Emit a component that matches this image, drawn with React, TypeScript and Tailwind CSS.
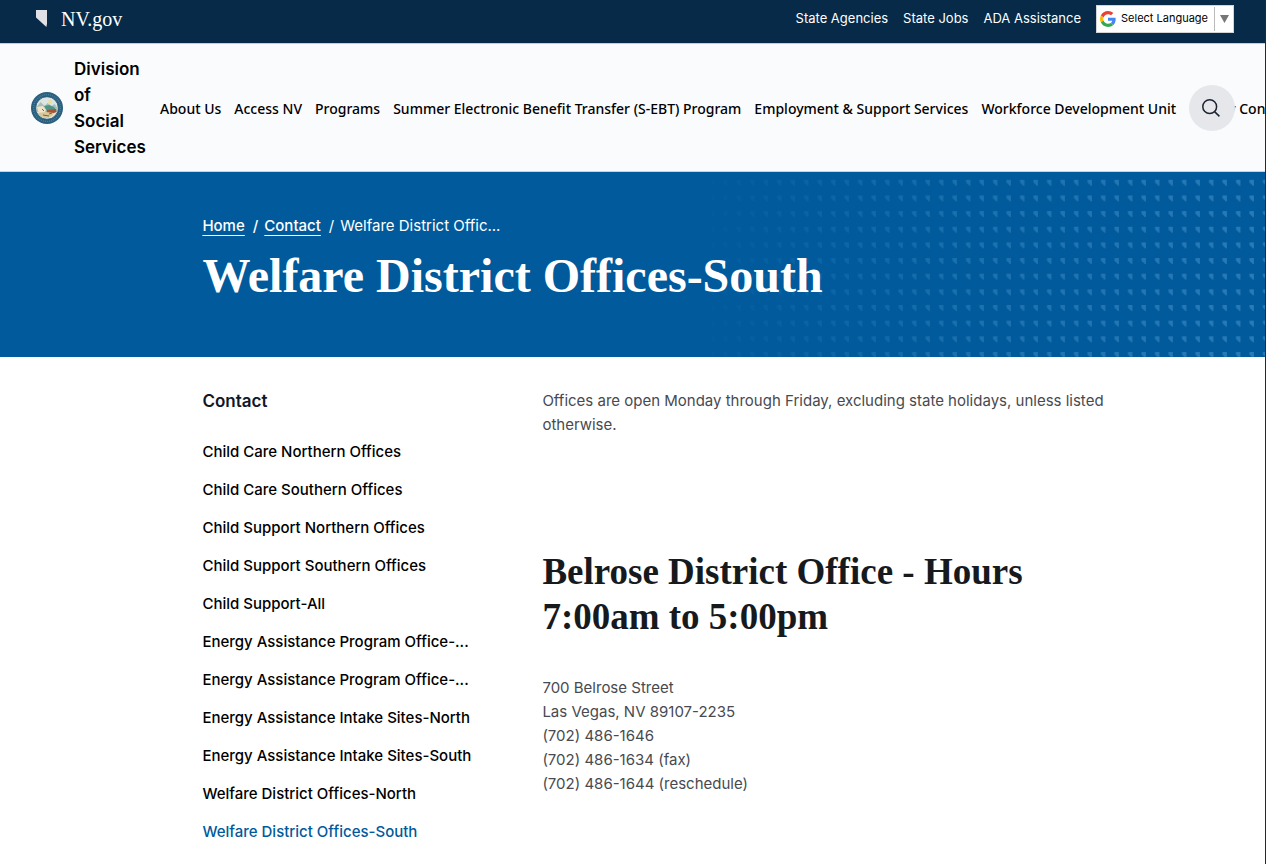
const utilityLinks = ["State Agencies", "State Jobs", "ADA Assistance"];

const navItems = [
  "About Us",
  "Access NV",
  "Programs",
  "Summer Electronic Benefit Transfer (S-EBT) Program",
  "Employment & Support Services",
  "Workforce Development Unit",
  "Energy Con",
];

const sideItems = [
  "Child Care Northern Offices",
  "Child Care Southern Offices",
  "Child Support Northern Offices",
  "Child Support Southern Offices",
  "Child Support-All",
  "Energy Assistance Program Office-...",
  "Energy Assistance Program Office-...",
  "Energy Assistance Intake Sites-North",
  "Energy Assistance Intake Sites-South",
  "Welfare District Offices-North",
  "Welfare District Offices-South",
];

const addressLines = [
  "700 Belrose Street",
  "Las Vegas, NV 89107-2235",
  "(702) 486-1646",
  "(702) 486-1634 (fax)",
  "(702) 486-1644 (reschedule)",
];

export default function App() {
  return (
    <div className="min-h-screen overflow-hidden border-r border-[#26282c] bg-white font-['Inter',sans-serif] text-black">
      <TopBar />
      <SiteHeader />
      <Hero />

      <div className="flex pt-8 pr-[10%] pl-[16%]">
        {/* Section menu */}
        <nav aria-label="Contact" className="w-[340px] shrink-0">
          <h2 className="text-[17px] leading-6 font-semibold text-[#0f172a]">Contact</h2>
          <ul className="pt-5">
            {sideItems.map((item, i) => (
              <li key={i} className="text-[15px] leading-[38px] font-medium whitespace-nowrap">
                <a
                  href="#"
                  className={i === sideItems.length - 1 ? "text-[#005a9c]" : "text-black"}
                >
                  {item}
                </a>
              </li>
            ))}
          </ul>
        </nav>

        <main className="min-w-0 flex-1 text-[15px] leading-6 text-[#474a50]">
          <p>
            Offices are open Monday through Friday, excluding state holidays, unless listed
            otherwise.
          </p>
          <h2 className="mt-28 font-['Liberation_Serif',serif] text-[37px] leading-[45px] font-bold text-[#171a1d]">
            Belrose District Office - Hours 7:00am to 5:00pm
          </h2>
          <address className="mt-[37px] not-italic">
            {addressLines.map((line) => (
              <div key={line}>{line}</div>
            ))}
          </address>
        </main>
      </div>
    </div>
  );
}

function TopBar() {
  return (
    <div className="flex h-11 items-center justify-between border-b border-[#c9ccd1] bg-[#062a48] pr-[31px] pb-1.5 pl-9 text-white">
      <a href="#" className="flex items-center gap-3.5">
        <svg width="11" height="17" viewBox="0 0 11 17" aria-hidden="true">
          <path d="M0 0h11v13.5l-.6 3.5L0 7.5z" fill="#dfe1e6" />
        </svg>
        <span className="font-['Liberation_Serif',serif] text-[20px] leading-6">NV.gov</span>
      </a>
      <div className="flex items-center gap-[15px] text-[13px]">
        {utilityLinks.map((link) => (
          <a key={link} href="#">
            {link}
          </a>
        ))}
        <LanguageSelect />
      </div>
    </div>
  );
}

function LanguageSelect() {
  return (
    <div className="flex h-7 w-[138px] items-center border border-[#d5d5d5] bg-white pl-[3px] text-black">
      <svg width="16" height="16" viewBox="0 0 48 48" className="shrink-0" aria-hidden="true">
        <path
          fill="#EA4335"
          d="M24 9.5c3.54 0 6.71 1.22 9.21 3.6l6.85-6.85C35.9 2.38 30.47 0 24 0 14.62 0 6.51 5.38 2.56 13.22l7.98 6.19C12.43 13.72 17.74 9.5 24 9.5z"
        />
        <path
          fill="#4285F4"
          d="M46.98 24.55c0-1.57-.15-3.09-.38-4.55H24v9.02h12.94c-.58 2.96-2.26 5.48-4.78 7.18l7.73 6c4.51-4.18 7.09-10.36 7.09-17.65z"
        />
        <path
          fill="#FBBC05"
          d="M10.53 28.59c-.48-1.45-.76-2.99-.76-4.59s.27-3.14.76-4.59l-7.98-6.19C.92 16.46 0 20.12 0 24c0 3.88.92 7.54 2.56 10.78l7.97-6.19z"
        />
        <path
          fill="#34A853"
          d="M24 48c6.48 0 11.93-2.13 15.89-5.81l-7.73-6c-2.15 1.45-4.92 2.3-8.16 2.3-6.26 0-11.57-4.22-13.47-9.91l-7.98 6.19C6.51 42.62 14.62 48 24 48z"
        />
      </svg>
      <select
        aria-label="Select Language"
        className="h-full min-w-0 flex-1 appearance-none pl-[5px] text-[11px]"
      >
        <option>Select Language</option>
      </select>
      <span className="h-6 w-px shrink-0 bg-[#bbbbbb]" />
      <svg width="18" height="8" viewBox="0 0 18 8" className="shrink-0" aria-hidden="true">
        <path d="M5 0h9L9.5 8z" fill="#767676" />
      </svg>
    </div>
  );
}

function SiteHeader() {
  return (
    <header className="relative flex items-center overflow-hidden border-b border-[#c9d3dd] bg-[#fafbfd] pt-3 pb-[11px] pl-[31px]">
      <StateSeal />
      <a
        href="#"
        className="ml-[11px] w-[86px] shrink-0 pr-5 text-[17px] leading-[26px] font-semibold"
      >
        Division of Social Services
      </a>
      <nav
        aria-label="Main"
        className="flex gap-[13px] pt-0.5 font-['Noto_Sans',sans-serif] text-sm font-medium whitespace-nowrap"
      >
        {navItems.map((item) => (
          <a key={item} href="#">
            {item}
          </a>
        ))}
      </nav>
      <button
        type="button"
        aria-label="Search"
        className="absolute top-1/2 right-[30px] flex size-[46px] -translate-y-1/2 items-center justify-center rounded-full bg-[#e5e7eb] pr-[3px] text-[#1b2430]"
      >
        <svg width="18" height="18" viewBox="0 0 18 18" fill="none" stroke="currentColor" strokeWidth="1.5">
          <circle cx="7.7" cy="7.7" r="6.9" />
          <path d="M12.6 12.6l4.8 4.8" />
        </svg>
      </button>
    </header>
  );
}

function StateSeal() {
  return (
    <svg width="32" height="32" viewBox="0 0 32 32" className="shrink-0" aria-hidden="true">
      <circle cx="16" cy="16" r="16" fill="#2b5f7e" />
      <circle cx="16" cy="16" r="13.4" fill="none" stroke="#4d86a3" strokeWidth="1.4" strokeDasharray=".8 1.2" />
      <circle cx="16" cy="16" r="11.3" fill="#dbe6e4" stroke="#1d4c6b" strokeWidth=".8" />
      <path d="M5.6 15l4-5 4 4 3-3 4 3 3-2 2.8 4v4H5.6z" fill="#a9bdb9" />
      <circle cx="19" cy="10" r="2" fill="#f1dc9a" />
      <path d="M13 14l5-1 5 2 2 3-9 1z" fill="#4f9585" />
      <path d="M6 15l6-1 3 4-3 5-4-1z" fill="#f0e3c8" />
      <path d="M16 18l9-1 .5 3-5 2-5-1z" fill="#a65336" />
      <path d="M7 21l8-1 8 1c-2 4-5 5-8 5s-6-1-8-5z" fill="#d9c797" />
      <path d="M11 17l2 2M18 22l3-1M12 23l6 1" stroke="#7b6143" strokeWidth="1" />
    </svg>
  );
}

function Hero() {
  return (
    <section className="relative h-[185px] bg-[#005a9c] pt-10 pl-[16%] text-white">
      <HeroPattern />
      <nav aria-label="Breadcrumb" className="relative text-[15px] leading-7">
        <ol className="flex">
          <li className="font-medium">
            <a href="#" className="underline underline-offset-4">
              Home
            </a>
          </li>
          <li className="font-medium">
            <span className="pr-1.5 pl-2">/</span>
            <a href="#" className="underline underline-offset-4">
              Contact
            </a>
          </li>
          <li>
            <span className="pr-1.5 pl-2">/</span>
            Welfare District Offic...
          </li>
        </ol>
      </nav>
      <h1 className="relative mt-2 font-['Liberation_Serif',serif] text-[48px] leading-[56px] font-bold">
        Welfare District Offices-South
      </h1>
    </section>
  );
}

/** Rows of small state outlines that fade in towards the right edge */
function HeroPattern() {
  return (
    <svg
      className="absolute top-0 right-0 h-full w-[553px]"
      viewBox="0 0 553 185"
      preserveAspectRatio="xMaxYMin slice"
      aria-hidden="true"
    >
      <defs>
        <pattern id="states" x="10.7" y="7.8" width="13.5" height="15.65" patternUnits="userSpaceOnUse">
          <path d="M.3 0h4.4v5.200l-.6 1.200L.3 2.800z" fill="#6db1e2" />
        </pattern>
        <linearGradient id="fade">
          <stop offset="0" stopColor="#fff" stopOpacity=".04" />
          <stop offset=".5" stopColor="#fff" stopOpacity=".5" />
          <stop offset="1" stopColor="#fff" stopOpacity=".7" />
        </linearGradient>
        <mask id="fadeMask" maskUnits="userSpaceOnUse" x="0" y="0" width="553" height="185">
          <rect width="553" height="185" fill="url(#fade)" />
        </mask>
      </defs>
      <g opacity=".55">
        <rect width="553" height="185" fill="url(#states)" mask="url(#fadeMask)" />
      </g>
    </svg>
  );
}
